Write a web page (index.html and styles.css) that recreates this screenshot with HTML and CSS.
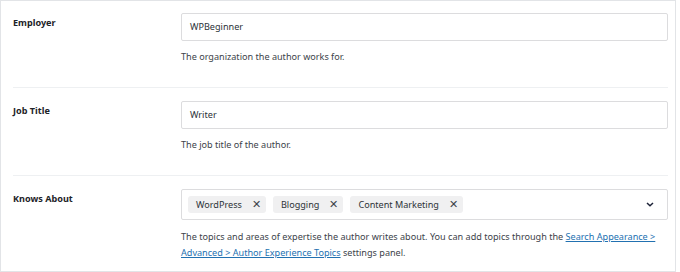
FILE: index.html
```html
<!DOCTYPE html>
<html>
<head>
<meta charset="utf-8">
<link rel="stylesheet" href="styles.css">
</head>
<body>
<div class="panel">
  <div class="row">
    <div class="label">Employer</div>
    <div class="field">
      <div class="input">WPBeginner</div>
      <p class="help">The organization the author works for.</p>
    </div>
  </div>
  <div class="row">
    <div class="label">Job Title</div>
    <div class="field">
      <div class="input">Writer</div>
      <p class="help">The job title of the author.</p>
    </div>
  </div>
  <div class="row last">
    <div class="label">Knows About</div>
    <div class="field">
      <div class="select">
        <div class="chips">
          <span class="chip">WordPress <span class="x">✕</span></span>
          <span class="chip">Blogging <span class="x">✕</span></span>
          <span class="chip">Content Marketing <span class="x">✕</span></span>
        </div>
        <svg class="chev" width="8" height="5" viewBox="0 0 8 5"><path d="M1 1 L4 3.8 L7 1" fill="none" stroke="#1d2338" stroke-width="1.5"/></svg>
      </div>
      <p class="help">The topics and areas of expertise the author writes about. You can add topics through the <a href="#">Search Appearance &gt; Advanced &gt; Author Experience Topics</a> settings panel.</p>
    </div>
  </div>
</div>
</body>
</html>
```
FILE: styles.css
```css
* { box-sizing: border-box; }
body { margin: 0; background: #fff; font-family: "Noto Sans", "Open Sans", sans-serif; font-size: 9.1px; color: #1d2327; }
.panel { width: 676px; height: 272px; border: 1px solid #e2e4e7; padding: 0 7px 0 12px; }
.row { display: grid; grid-template-columns: 168px 1fr; padding: 12px 0 22px; border-bottom: 1px solid #eef0f2; }
.row + .row { padding-top: 13px; }
.row.last { border-bottom: none; padding-bottom: 0; }
.label { font-weight: 700; line-height: 16px; color: #1d2327; margin-top: 2px; }
.input { height: 28px; border: 1px solid #dcdcde; border-radius: 2px; padding: 0 8px; line-height: 26px; color: #2c3338; }
.help { margin: 8px 0 0; line-height: 16px; color: #3c434a; }
.select + .help { margin-top: 9px; }
.help a { color: #2271b1; text-decoration: underline; }
.select { height: 31px; border: 1px solid #dcdcde; border-radius: 2px; display: flex; align-items: center; justify-content: space-between; padding: 0 13px 0 6px; }
.chips { display: flex; gap: 7px; }
.chip { background: #f0f0f1; border-radius: 3px; height: 17px; line-height: 17px; padding: 0 5px 0 8px; display: inline-flex; align-items: center; gap: 10px; color: #2c3338; }
.x { font-size: 10.5px; color: #3c434a; }
.chev { display: block; }
```
